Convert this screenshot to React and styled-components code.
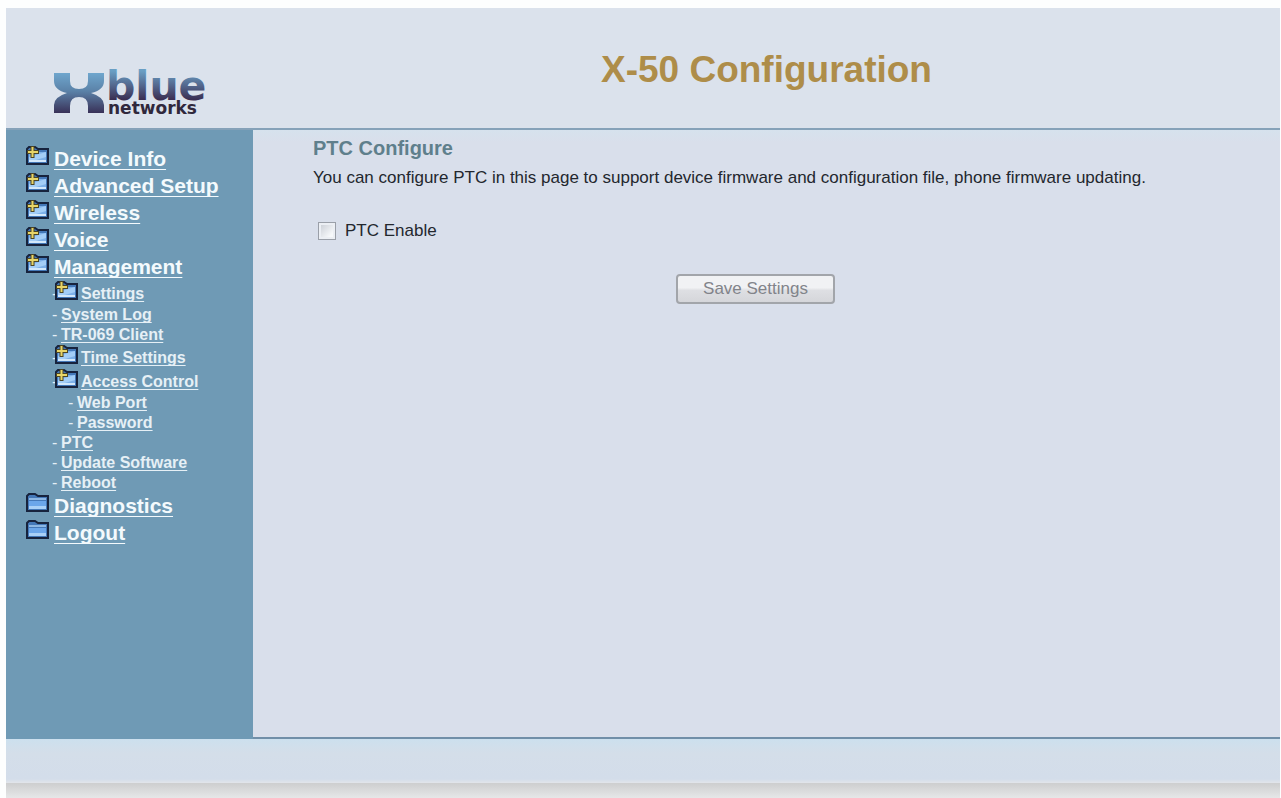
import React from "react";
import styled, { createGlobalStyle, css } from "styled-components";

const GlobalStyle = createGlobalStyle`
  * { box-sizing: border-box; }
  body {
    margin: 0;
    background: #fdfefe;
    font-family: "Liberation Sans", Arial, sans-serif;
    color: #23272e;
  }
`;

const Page = styled.div`
  display: flex;
  flex-direction: column;
  min-height: 100vh;
  padding: 8px 1px 0 6px;
`;

const Header = styled.header`
  display: flex;
  height: 122px;
  background: #dbe2ec;
  border-bottom: 2px solid #86a2b9;
`;

const LogoCell = styled.div`
  flex: 0 0 247px;
  padding: 60px 0 0 44px;
`;

const LogoSvg = styled.svg`
  display: block;
  overflow: visible;
`;

const Title = styled.h1`
  flex: 1;
  margin: 0;
  padding: 41px 0 0;
  color: #ae8d49;
  font-size: 37px;
  line-height: 42px;
  text-align: center;
`;

const Body = styled.div`
  display: flex;
  flex: 1;
`;

const Sidebar = styled.nav`
  flex: 0 0 247px;
  padding: 16px 0 0 20px;
  background: #6f9ab5;
`;

const Menu = styled.ul`
  list-style: none;
  margin: 0;
  padding: 0;
`;

const MenuRow = styled.li`
  display: flex;
  gap: 5px;
  height: 27px;
  line-height: 26px;
  font-size: 21px;
  font-weight: bold;
`;

const SubRow = styled.li`
  display: flex;
  gap: 4px;
  height: 20px;
  margin-left: ${(p) => (p.$deep ? "42px" : "26px")};
  line-height: 20px;
  font-size: 16px;
  font-weight: bold;
  color: #e3eef5;
  ${(p) =>
    p.$folder &&
    css`
      gap: 3px;
      height: 24px;
      line-height: 26px;
    `}
`;

const Dash = styled.span`
  width: ${(p) => (p.$tight ? "0" : "5px")};
  font-weight: normal;
`;

const NavLink = styled.a`
  color: ${(p) => (p.$sub ? "#e6f0f6" : "#f4fafd")};
  text-decoration: underline;
  text-decoration-skip-ink: none;
  text-decoration-thickness: 1px;
  text-underline-offset: ${(p) => (p.$sub ? "2px" : "3px")};
  white-space: nowrap;
`;

const FolderSvg = styled.svg`
  flex: none;
  display: block;
`;

const Main = styled.main`
  flex: 1;
  padding: 6px 82px 0 60px;
  background: linear-gradient(#d6e2ed, #d9dfeb 12px, #d9dfeb);
  border-bottom: 2px solid #718fa8;
`;

const Heading = styled.h2`
  margin: 0;
  color: #5f7f8c;
  font-size: 20px;
  line-height: 24px;
`;

const Description = styled.p`
  margin: 6px 0 0;
  font-size: 17px;
  line-height: 24px;
`;

const CheckLabel = styled.label`
  display: flex;
  align-items: center;
  gap: 9px;
  width: max-content;
  margin-top: 29px;
  padding-left: 5px;
  font-size: 17px;
  line-height: 24px;
`;

const Checkbox = styled.input`
  appearance: none;
  width: 18px;
  height: 18px;
  margin: 0;
  border: 1px solid #9a9fa8;
  background: linear-gradient(135deg, #c6cad2, #f6f8fa 75%);
  box-shadow: inset 0 0 0 2px #eceff4;
  &:checked {
    background: #4f7d99;
  }
`;

const Actions = styled.div`
  display: flex;
  justify-content: center;
  margin-top: 31px;
`;

const SaveButton = styled.button`
  width: 159px;
  height: 30px;
  padding: 0;
  border: 2px solid #a2a5aa;
  border-radius: 4px;
  background: linear-gradient(#f1f2f4 45%, #dedfe3 55%, #d5d6da);
  color: #82848a;
  font-family: inherit;
  font-size: 17px;
`;

const Footer = styled.footer`
  height: 44px;
  background: linear-gradient(#cce0ee, #d4dee9 14px, #d3ddea 40px, #e2e5ea);
`;

const BottomEdge = styled.div`
  height: 15px;
  background: linear-gradient(#cdcecf, #e6e7e8);
`;

function Logo() {
  return (
    <LogoSvg width="168" height="50" viewBox="0 0 168 50" role="img" aria-label="Xblue networks">
      <defs>
        <linearGradient id="mark" x1="0" y1="5" x2="0" y2="45" gradientUnits="userSpaceOnUse">
          <stop offset="0" stopColor="#6fa6cd" />
          <stop offset="0.45" stopColor="#5b82a8" />
          <stop offset="1" stopColor="#393158" />
        </linearGradient>
        <linearGradient id="word" x1="0" y1="3" x2="0" y2="33" gradientUnits="userSpaceOnUse">
          <stop offset="0" stopColor="#6a9fc4" />
          <stop offset="0.5" stopColor="#52658b" />
          <stop offset="1" stopColor="#38294c" />
        </linearGradient>
      </defs>
      <path
        fill="url(#mark)"
        d="M4 5H20V13Q20 21 29 21Q38 21 38 13V5H54V13Q54 22 41 25Q54 29 54 37V45H38V38Q38 29 29 29Q20 29 20 38V45H4V37Q4 29 17 25Q4 22 4 13Z"
      />
      <g fontFamily='"DejaVu Sans", Verdana, sans-serif' fontWeight="bold">
        <text x="56" y="32" fontSize="41" fill="url(#word)">blue</text>
        <text x="58" y="46" fontSize="17" fill="#30283c">networks</text>
      </g>
    </LogoSvg>
  );
}

function Folder({ plus }) {
  return (
    <FolderSvg width="23" height="20" viewBox="0 0 23 20" aria-hidden="true">
      <path d="M1 18V3L3 1H9L12 3H22V18Z" fill="#4478b8" stroke="#17233d" strokeWidth="2" />
      {plus ? (
        <g fill="none">
          <path d="M3 6H20V16H3Z" fill="#7db0e8" />
          <path d="M3 11L20 6V11L3 16Z" fill="#a3cdf6" />
          <path d="M3 14H20V16H3Z" fill="#d3e8fb" />
          <path d="M6.500 0V12M1 6H13" stroke="#4c4523" strokeWidth="4" />
          <path d="M6.500 1V11M2 6H12" stroke="#e8d568" strokeWidth="2" />
        </g>
      ) : (
        <g>
          <path d="M3 5H20V7H3Z" fill="#8db7e3" />
          <path d="M3 8H20V16H3Z" fill="#6ba6ea" />
          <path d="M3 13H20V16H3Z" fill="#a9d0f7" />
        </g>
      )}
    </FolderSvg>
  );
}

function Item({ children, plus }) {
  return (
    <MenuRow>
      <Folder plus={plus} />
      <NavLink href="#">{children}</NavLink>
    </MenuRow>
  );
}

function SubItem({ children, folder, deep }) {
  return (
    <SubRow $folder={folder} $deep={deep}>
      <Dash $tight={folder}>-</Dash>
      {folder && <Folder plus />}
      <NavLink href="#" $sub>{children}</NavLink>
    </SubRow>
  );
}

export default function App() {
  return (
    <Page>
      <GlobalStyle />
      <Header>
        <LogoCell>
          <Logo />
        </LogoCell>
        <Title>X-50 Configuration</Title>
      </Header>
      <Body>
        <Sidebar>
          <Menu>
            <Item plus>Device Info</Item>
            <Item plus>Advanced Setup</Item>
            <Item plus>Wireless</Item>
            <Item plus>Voice</Item>
            <Item plus>Management</Item>
            <SubItem folder>Settings</SubItem>
            <SubItem>System Log</SubItem>
            <SubItem>TR-069 Client</SubItem>
            <SubItem folder>Time Settings</SubItem>
            <SubItem folder>Access Control</SubItem>
            <SubItem deep>Web Port</SubItem>
            <SubItem deep>Password</SubItem>
            <SubItem>PTC</SubItem>
            <SubItem>Update Software</SubItem>
            <SubItem>Reboot</SubItem>
            <Item>Diagnostics</Item>
            <Item>Logout</Item>
          </Menu>
        </Sidebar>
        <Main>
          <Heading>PTC Configure</Heading>
          <Description>
            You can configure PTC in this page to support device firmware and configuration file, phone firmware updating.
          </Description>
          <CheckLabel htmlFor="ptc-enable">
            <Checkbox id="ptc-enable" type="checkbox" />
            PTC Enable
          </CheckLabel>
          <Actions>
            <SaveButton type="button">Save Settings</SaveButton>
          </Actions>
        </Main>
      </Body>
      <Footer />
      <BottomEdge />
    </Page>
  );
}
